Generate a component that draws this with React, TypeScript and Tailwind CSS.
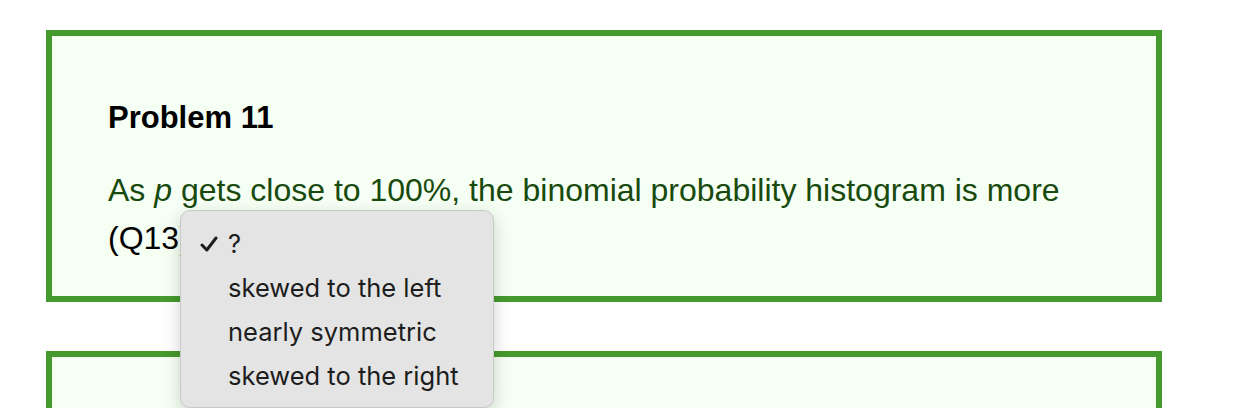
export default function App() {
  const options = ["?", "skewed to the left", "nearly symmetric", "skewed to the right"];
  return (
    <div className="relative h-[408px] overflow-hidden bg-white pt-[30px] pl-[46px] font-['Liberation_Sans',Arial,sans-serif]">
      <div className="w-[1116px] border-[6px] border-[#459a2d] bg-[#f6fff3] px-[56px] pt-[64px] pb-[34px]">
        <h2 className="text-[31px] leading-[36px] font-bold text-black">Problem 11</h2>
        <p className="mt-[30px] text-[32px] leading-[48px] text-[#184a0e]">
          As <i>p</i> gets close to 100%, the binomial probability histogram is more{" "}
          <span className="text-black">(Q13)</span>{" "}
          <span className="inline-block w-[60px]"></span>
        </p>
      </div>
      <div className="mt-[49px] h-[80px] w-[1116px] border-[6px] border-[#459a2d] bg-[#f6fff3]"></div>

      {/* native select menu, open */}
      <div className="absolute left-[180px] top-[210px] w-[314px] rounded-[10px] border border-[#c9c9c9] bg-[#e4e4e4] pt-[11px] pb-[9px] shadow-[0_6px_18px_rgba(0,0,0,0.18)] font-['Inter',sans-serif] text-[25.5px] text-[#1d1d1d]">
        {options.map((o, i) => (
          <div key={o} className="flex h-[44px] items-center">
            <span className="flex w-[47px] justify-start pl-[19px]">
              {i === 0 && (
                <svg width="18" height="16" viewBox="0 0 18 16">
                  <path d="M2 9 L6.8 14 L16 2" fill="none" stroke="#1d1d1d" strokeWidth="3" strokeLinecap="round" strokeLinejoin="round" />
                </svg>
              )}
            </span>
            <span>{o}</span>
          </div>
        ))}
      </div>
    </div>
  );
}
